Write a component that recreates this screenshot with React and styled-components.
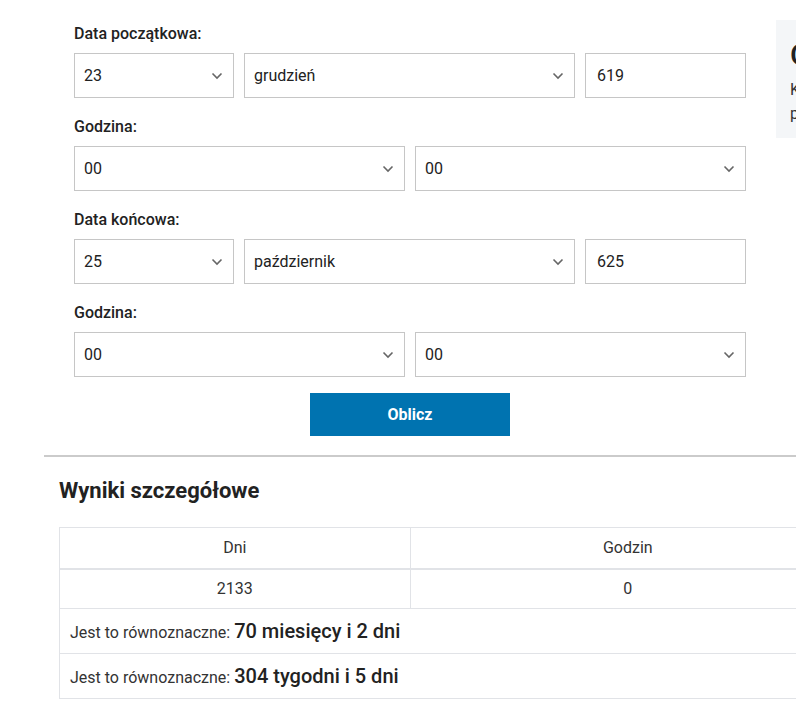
import React from 'react';
import styled, { createGlobalStyle } from 'styled-components';

const GlobalStyle = createGlobalStyle`
	html, body {
		margin: 0;
		padding: 0;
		background: #fff;
		overflow: hidden;
	}
	body {
		font-family: Roboto, 'Liberation Sans', Arial, sans-serif;
		color: #222;
	}
`;

const Page = styled.div`
	width: 1200px;
	padding: 20px 0 0 44px;
	box-sizing: border-box;
`;

const TopSection = styled.div`
	display: flex;
	align-items: flex-start;
`;

const FormColumn = styled.div`
	margin-left: 30px;
	padding-top: 4px;
	width: 672px;
	flex-shrink: 0;
`;

const Label = styled.div`
	font-size: 16px;
	font-weight: 500;
	line-height: 20px;
	color: #222;
	margin: ${({ first }) => (first ? '0' : '19px')} 0 9px;
`;

const Row = styled.div`
	display: grid;
	grid-template-columns: ${({ cols }) => cols};
	gap: 10px;
`;

const SelectWrap = styled.div`
	position: relative;
	height: 45px;
`;

const SelectBox = styled.select`
	appearance: none;
	-webkit-appearance: none;
	width: 100%;
	height: 45px;
	box-sizing: border-box;
	border: 1px solid #c6c6c6;
	border-radius: 0;
	background: #fff;
	padding: 0 30px 0 9px;
	font-family: inherit;
	font-size: 16px;
	color: #222;
	outline: none;
`;

const Chevron = styled.svg`
	position: absolute;
	right: 11px;
	top: 19px;
	width: 12px;
	height: 8px;
	pointer-events: none;
`;

const TextInput = styled.input`
	width: 100%;
	height: 45px;
	box-sizing: border-box;
	border: 1px solid #c6c6c6;
	border-radius: 0;
	padding: 0 11px;
	font-family: inherit;
	font-size: 16px;
	color: #222;
	outline: none;
`;

const ButtonRow = styled.div`
	display: flex;
	justify-content: center;
	margin-top: 16px;
`;

const Button = styled.button`
	width: 200px;
	height: 43px;
	border: none;
	background: #0073b0;
	color: #fff;
	font-family: inherit;
	font-size: 16px;
	font-weight: 700;
	cursor: pointer;
`;

const Aside = styled.div`
	margin-left: 30px;
	width: 320px;
	height: 118px;
	background: #f4f6f8;
	padding: 17px 14px 0;
	box-sizing: border-box;
	flex-shrink: 0;
`;

const AsideTitle = styled.div`
	font-size: 30px;
	font-weight: 500;
	line-height: 36px;
	margin-bottom: 5px;
`;

const AsideText = styled.div`
	font-size: 16px;
	line-height: 24px;
	color: #333;
`;

const Divider = styled.hr`
	margin: 19px 0 0;
	border: none;
	border-top: 2px solid #cbcbcb;
	width: 1000px;
`;

const Results = styled.div`
	padding-left: 15px;
`;

const Heading = styled.h2`
	margin: 20px 0 22px;
	font-size: 22px;
	font-weight: 700;
	line-height: 28px;
	color: #222;
`;

const Table = styled.table`
	width: 787px;
	border-collapse: collapse;
	font-size: 16px;
	color: #333;
`;

const Cell = styled.td`
	border: 1px solid #e1e3e7;
	border-bottom-width: ${({ thick }) => (thick ? '2px' : '1px')};
	height: ${({ h }) => h || 40}px;
	padding: 0 10px;
	text-align: ${({ left }) => (left ? 'left' : 'center')};
	box-sizing: border-box;
`;

const Note = styled.span`
	font-size: 16px;
	color: #333;
`;

const Strong = styled.span`
	font-size: 20px;
	font-weight: 500;
	color: #222;
`;

const Select = ({ value }) => (
	<SelectWrap>
		<SelectBox defaultValue={value}>
			<option value={value}>{value}</option>
		</SelectBox>
		<Chevron viewBox='0 0 12 8'>
			<polyline points='1.5,1.5 6,6 10.5,1.5' fill='none' stroke='#666' strokeWidth='1.6' />
		</Chevron>
	</SelectWrap>
);

const DateRow = ({ day, month, year }) => (
	<Row cols='160px 331px 1fr'>
		<Select value={day} />
		<Select value={month} />
		<TextInput defaultValue={year} />
	</Row>
);

const TimeRow = () => (
	<Row cols='1fr 1fr'>
		<Select value='00' />
		<Select value='00' />
	</Row>
);

const App = () => (
	<>
		<GlobalStyle />
		<Page>
			<TopSection>
				<FormColumn>
					<Label first>Data początkowa:</Label>
					<DateRow day='23' month='grudzień' year='619' />
					<Label>Godzina:</Label>
					<TimeRow />
					<Label>Data końcowa:</Label>
					<DateRow day='25' month='październik' year='625' />
					<Label>Godzina:</Label>
					<TimeRow />
					<ButtonRow>
						<Button>Oblicz</Button>
					</ButtonRow>
				</FormColumn>
				<Aside>
					<AsideTitle>O kalkulatorze</AsideTitle>
					<AsideText>Kalkulator dni</AsideText>
					<AsideText>pozwala obliczyć</AsideText>
				</Aside>
			</TopSection>
			<Divider />
			<Results>
				<Heading>Wyniki szczegółowe</Heading>
				<Table>
					<tbody>
						<tr>
							<Cell h={41} thick>Dni</Cell>
							<Cell h={41} thick>Godzin</Cell>
						</tr>
						<tr>
							<Cell>2133</Cell>
							<Cell>0</Cell>
						</tr>
						<tr>
							<Cell h={45} left colSpan={2}>
								<Note>Jest to równoznaczne: </Note>
								<Strong>70 miesięcy i 2 dni</Strong>
							</Cell>
						</tr>
						<tr>
							<Cell h={45} left colSpan={2}>
								<Note>Jest to równoznaczne: </Note>
								<Strong>304 tygodni i 5 dni</Strong>
							</Cell>
						</tr>
					</tbody>
				</Table>
			</Results>
		</Page>
	</>
);

export default App;
